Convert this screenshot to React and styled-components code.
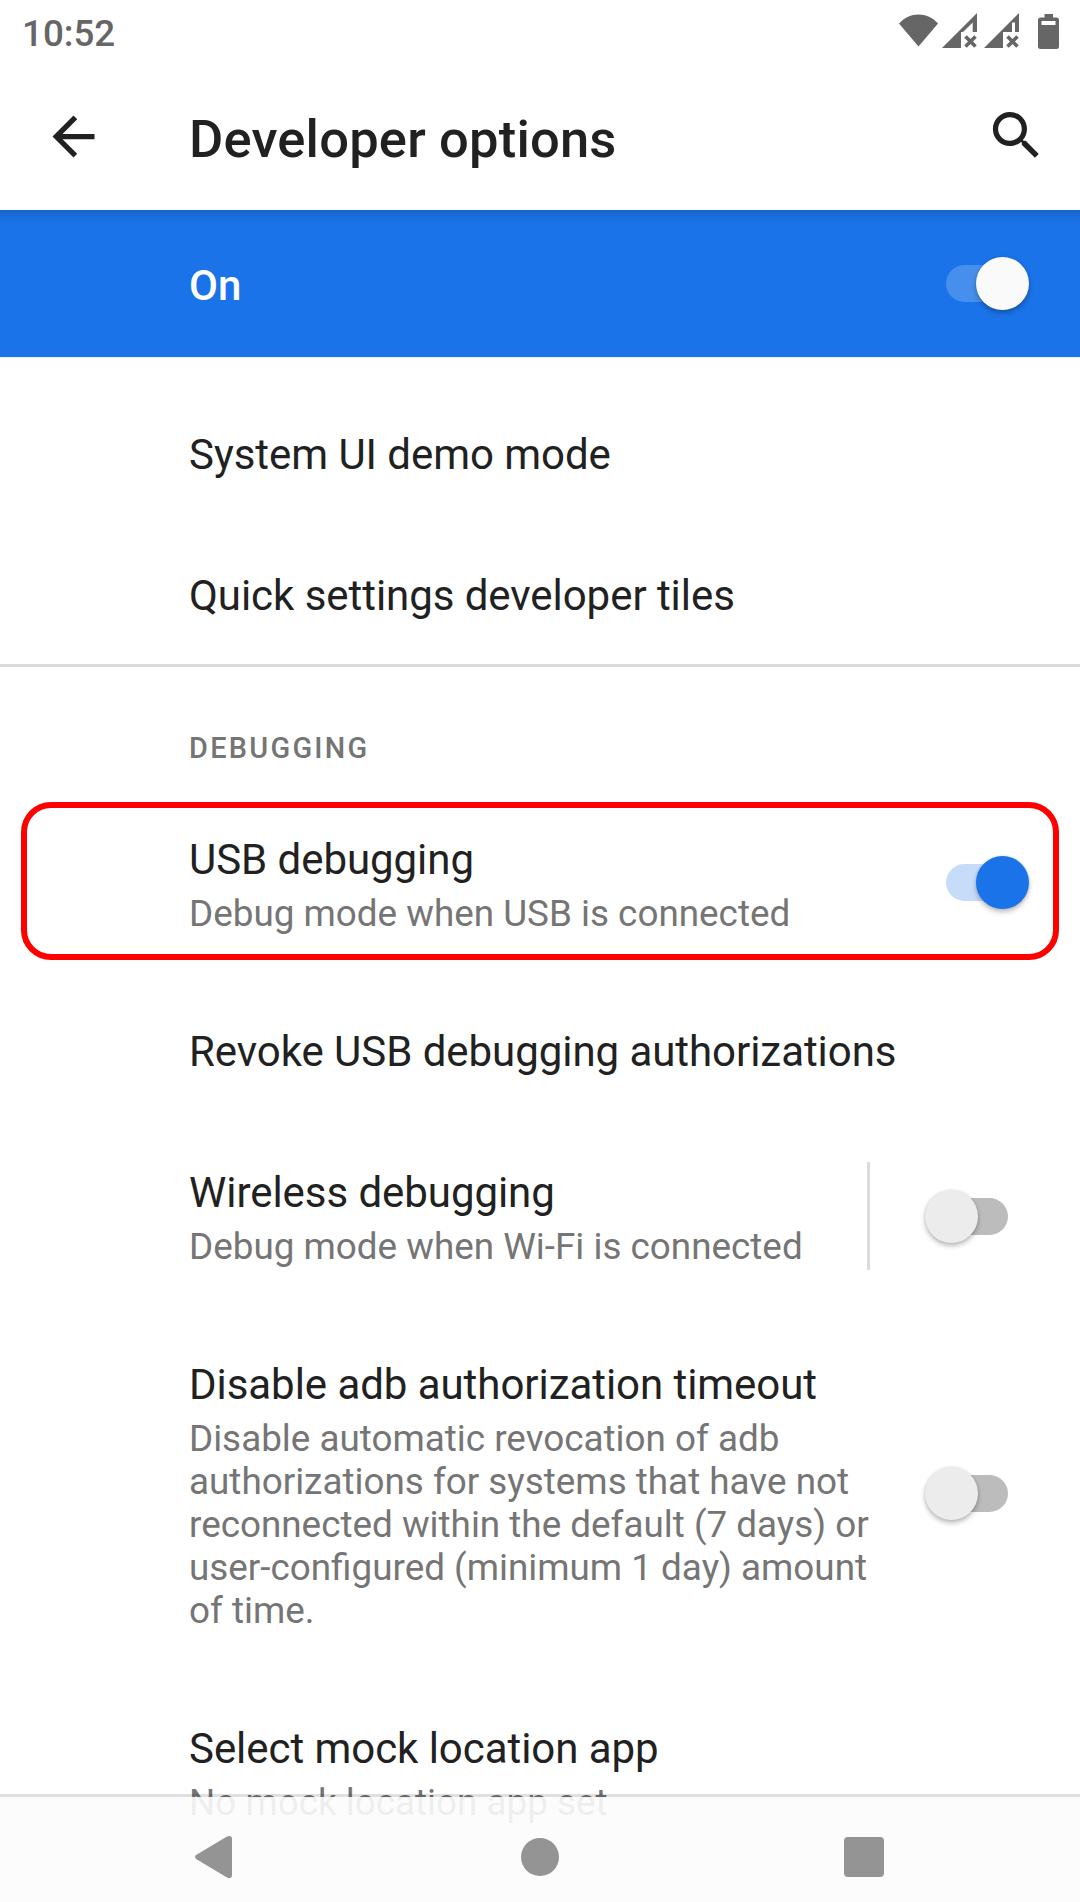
import React from "react";
import styled, { createGlobalStyle } from "styled-components";

const GlobalStyle = createGlobalStyle`
  *, *::before, *::after { box-sizing: border-box; }
  body { margin: 0; background: #fff; overflow: hidden; }
`;

const Screen = styled.main`
  position: relative;
  display: flex;
  flex-direction: column;
  width: 1080px;
  height: 1902px;
  overflow: hidden;
  background: #fff;
  color: #212121;
  font-family: Roboto, "Noto Sans", sans-serif;
`;

const StatusBar = styled.div`
  display: flex;
  justify-content: space-between;
  height: 63px;
  padding: 12px 21px 0 22px;
  color: #666;
`;

const Clock = styled.span`
  font-size: 36.75px;
  font-weight: 500;
  line-height: 43px;
`;

const StatusIcons = styled.svg`
  width: 160px;
  height: 37px;
  margin-top: 1px;
  fill: currentColor;
`;

const AppBar = styled.header`
  display: flex;
  align-items: flex-start;
  height: 147px;
  padding: 42px 32px 0 42px;
`;

const BarIcon = styled.svg`
  width: 63px;
  height: 63px;
  flex: none;
  margin-top: ${(p) => p.$lift || 0}px;
  fill: #212121;
`;

const ScreenTitle = styled.h1`
  flex: 1;
  margin: 3px 0 0 84px;
  font-size: 52.5px;
  font-weight: 500;
  line-height: 62px;
  letter-spacing: 0.18px;
`;

const MasterSwitch = styled.section`
  display: flex;
  align-items: center;
  justify-content: space-between;
  height: 147px;
  padding: 0 51px 0 189px;
  color: #fff;
  background: linear-gradient(rgba(0, 0, 0, 0.13), rgba(0, 0, 0, 0.04) 8px, transparent 16px) #1a73e8;
  box-shadow: 0 1px 1px rgba(0, 0, 0, 0.08);
`;

const MasterLabel = styled.span`
  font-size: 42px;
  font-weight: 500;
  line-height: 49px;
  padding-top: 3px;
`;

const Preferences = styled.div`
  display: flex;
  flex-direction: column;
  padding-top: 25px;
`;

const Row = styled.div`
  position: relative;
  display: flex;
  align-items: center;
  flex: none;
  padding: 0 51px 0 189px;
`;

const RowText = styled.div`
  display: flex;
  flex-direction: column;
  flex: 1;
  gap: 8px;
  padding: 48px 0 44px;
`;

const RowTitle = styled.span`
  font-size: 42px;
  line-height: 49px;
  letter-spacing: -0.05px;
  white-space: nowrap;
`;

const Summary = styled.span`
  max-width: 690px;
  color: #757575;
  font-size: 36.85px;
  line-height: 43px;
`;

const Category = styled.h2`
  height: 123px;
  margin: 0;
  padding: 64px 0 0 189px;
  border-top: 3px solid #dadce0;
  color: #757575;
  font-size: 28.875px;
  font-weight: 500;
  line-height: 34px;
  letter-spacing: 2.3px;
`;

const Highlight = styled.div`
  position: absolute;
  top: 15px;
  left: 21px;
  width: 1038px;
  height: 158px;
  border: 6px solid #f00;
  border-radius: 30px;
`;

const SwitchDivider = styled.span`
  width: 3px;
  height: 108px;
  margin-right: 55px;
  background: #dadce0;
`;

const ControlSlot = styled.span`
  display: flex;
  flex: none;
  padding: ${(p) => (p.$divided ? "1px 0 0" : "0 0 1px")};
`;

const palettes = {
  master: { track: "rgba(255,255,255,0.2)", thumb: "#fafafa" },
  on: { track: "#c6dcf9", thumb: "#1a73e8" },
  off: { track: "#bcbcbc", thumb: "#ececec" },
};

const SwitchTrack = styled.span`
  display: flex;
  align-items: center;
  justify-content: ${(p) => (p.$kind === "off" ? "flex-start" : "flex-end")};
  flex: none;
  width: 62px;
  height: 37px;
  margin: 0 21px;
  border-radius: 19px;
  background: ${(p) => palettes[p.$kind].track};
`;

const SwitchThumb = styled.span`
  flex: none;
  width: 53px;
  height: 53px;
  margin: 0 -21px;
  border-radius: 50%;
  background: ${(p) => palettes[p.$kind].thumb};
  box-shadow: 0 3px 5px rgba(0, 0, 0, 0.26), 0 0 3px rgba(0, 0, 0, 0.1);
`;

const NavBar = styled.nav`
  position: absolute;
  left: 0;
  right: 0;
  bottom: 0;
  display: flex;
  align-items: center;
  justify-content: space-between;
  height: 108px;
  border-top: 3px solid rgba(0, 0, 0, 0.12);
  background: rgba(252, 252, 252, 0.9);
  background-clip: padding-box;
  padding: 15px 186px 0;
`;

const NavIcon = styled.svg`
  width: 60px;
  height: 60px;
  fill: #949494;
`;

function Switch({ kind }) {
  return (
    <SwitchTrack $kind={kind}>
      <SwitchThumb $kind={kind} />
    </SwitchTrack>
  );
}

function Preference({ title, summary, control, divided, highlighted }) {
  return (
    <Row>
      <RowText>
        <RowTitle>{title}</RowTitle>
        {summary && <Summary>{summary}</Summary>}
      </RowText>
      {divided && <SwitchDivider />}
      {control && (
        <ControlSlot $divided={divided}>
          <Switch kind={control} />
        </ControlSlot>
      )}
      {highlighted && <Highlight />}
    </Row>
  );
}

export default function App() {
  return (
    <Screen>
      <GlobalStyle />
      <StatusBar>
        <Clock>10:52</Clock>
        <StatusIcons viewBox="0 0 160 37">
          <path d="M0 10.5C10.500-1.500 28.500-1.500 39 10.500L19.500 33.500Z" />
          <path d="M78 0V19H73.700V9.500L64 19H62V35H43Z" />
          <path d="M120 0V19H116V9.500H113V19H104V35H85Z" />
          <path d="M66.500 23.500l10 10m0-10l-10 10M108.500 23.500l10 10m0-10l-10 10" stroke="currentColor" strokeWidth="3.6" fill="none" />
          <path fillRule="evenodd" d="M145.500 1H154V4.500H157.500Q160 4.500 160 7V33.500Q160 36 157.500 36H141.500Q139 36 139 33.500V7Q139 4.500 141.500 4.500H145.500ZM142.500 8V12H156.500V8Z" />
        </StatusIcons>
      </StatusBar>
      <AppBar>
        <BarIcon viewBox="0 0 24 24">
          <path d="M20 11H7.830l5.590-5.590L12 4l-8 8 8 8 1.410-1.410L7.830 13H20v-2z" />
        </BarIcon>
        <ScreenTitle>Developer options</ScreenTitle>
        <BarIcon viewBox="0 0 24 24" $lift={-1}>
          <path d="M15.500 14h-.79l-.28-.27C15.410 12.590 16 11.110 16 9.500 16 5.910 13.090 3 9.500 3S3 5.910 3 9.500 5.910 16 9.500 16c1.610 0 3.090-.59 4.230-1.570l.27.28v.79l5 4.990L20.490 19l-4.990-5zm-6 0C7.010 14 5 11.990 5 9.500S7.010 5 9.500 5 14 7.010 14 9.500 11.990 14 9.500 14z" />
        </BarIcon>
      </AppBar>
      <MasterSwitch>
        <MasterLabel>On</MasterLabel>
        <Switch kind="master" />
      </MasterSwitch>
      <Preferences>
        <Preference title="System UI demo mode" />
        <Preference title="Quick settings developer tiles" />
        <Category>DEBUGGING</Category>
        <Preference title="USB debugging" summary="Debug mode when USB is connected" control="on" highlighted />
        <Preference title="Revoke USB debugging authorizations" />
        <Preference title="Wireless debugging" summary="Debug mode when Wi-Fi is connected" control="off" divided />
        <Preference
          title="Disable adb authorization timeout"
          summary="Disable automatic revocation of adb authorizations for systems that have not reconnected within the default (7 days) or user-configured (minimum 1 day) amount of time."
          control="off"
        />
        <Preference title="Select mock location app" summary="No mock location app set" />
      </Preferences>
      <NavBar>
        <NavIcon viewBox="0 0 60 60">
          <path d="M10.500 27.800L41 9.600Q46 7.500 46 12V48Q46 52.500 41 50.400L10.500 32.200Q7.500 30 10.500 27.800Z" />
        </NavIcon>
        <NavIcon viewBox="0 0 60 60">
          <circle cx="30" cy="30" r="19" />
        </NavIcon>
        <NavIcon viewBox="0 0 60 60">
          <rect x="10" y="10" width="40" height="40" rx="4" />
        </NavIcon>
      </NavBar>
    </Screen>
  );
}
